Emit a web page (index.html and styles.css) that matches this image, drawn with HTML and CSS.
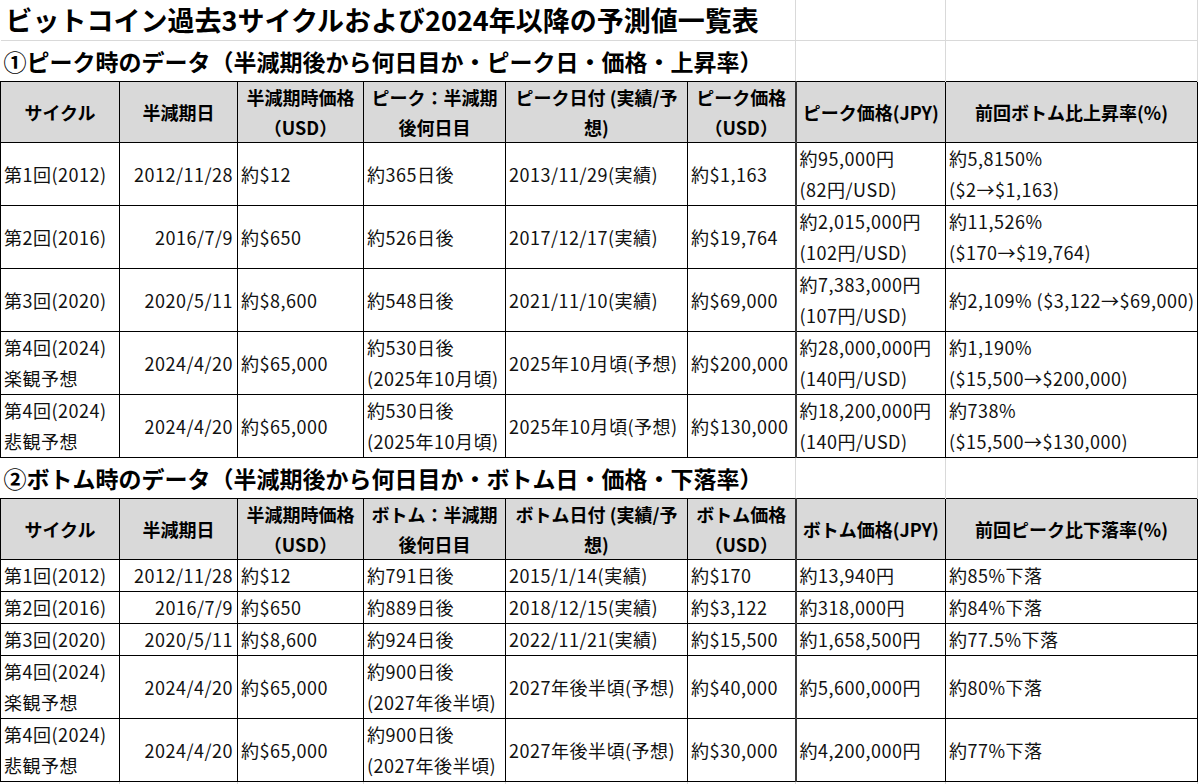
FILE: index.html
```html
<!DOCTYPE html>
<html lang="ja">
<head>
<meta charset="utf-8">
<title>ビットコイン過去3サイクルおよび2024年以降の予測値一覧表</title>
<link rel="stylesheet" href="styles.css">
</head>
<body>
<table class="sheet">
  <colgroup>
    <col class="c-a"><col class="c-b"><col class="c-c"><col class="c-d"><col class="c-e"><col class="c-f"><col class="c-g"><col class="c-h">
  </colgroup>
  <tbody>
    <tr class="r-title">
      <td colspan="6" class="title g gb">ビットコイン過去3サイクルおよび2024年以降の予測値一覧表</td>
      <td class="g gb"></td>
      <td class="g gb"></td>
    </tr>
    <tr class="r-head">
      <td colspan="6" class="heading g">①ピーク時のデータ（半減期後から何日目か・ピーク日・価格・上昇率）</td>
      <td class="g"></td>
      <td class="g"></td>
    </tr>
    <tr class="t hdr r-hdr1">
      <td>サイクル</td>
      <td>半減期日</td>
      <td>半減期時価格<br>（USD）</td>
      <td>ピーク：半減期<br>後何日目</td>
      <td>ピーク日付 (実績/予<br>想)</td>
      <td>ピーク価格<br>（USD）</td>
      <td class="gl">ピーク価格(JPY)</td>
      <td>前回ボトム比上昇率(%)</td>
    </tr>
    <tr class="t r63">
      <td>第1回(2012)</td>
      <td class="num">2012/11/28</td>
      <td>約$12</td>
      <td>約365日後</td>
      <td>2013/11/29(実績)</td>
      <td>約$1,163</td>
      <td class="gl">約95,000円<br>(82円/USD)</td>
      <td>約5,8150%<br>($2→$1,163)</td>
    </tr>
    <tr class="t r63">
      <td>第2回(2016)</td>
      <td class="num">2016/7/9</td>
      <td>約$650</td>
      <td>約526日後</td>
      <td>2017/12/17(実績)</td>
      <td>約$19,764</td>
      <td class="gl">約2,015,000円<br>(102円/USD)</td>
      <td>約11,526%<br>($170→$19,764)</td>
    </tr>
    <tr class="t r63">
      <td>第3回(2020)</td>
      <td class="num">2020/5/11</td>
      <td>約$8,600</td>
      <td>約548日後</td>
      <td>2021/11/10(実績)</td>
      <td>約$69,000</td>
      <td class="gl">約7,383,000円<br>(107円/USD)</td>
      <td>約2,109% ($3,122→$69,000)</td>
    </tr>
    <tr class="t r63">
      <td>第4回(2024)<br>楽観予想</td>
      <td class="num">2024/4/20</td>
      <td>約$65,000</td>
      <td>約530日後<br>(2025年10月頃)</td>
      <td>2025年10月頃(予想)</td>
      <td>約$200,000</td>
      <td class="gl">約28,000,000円<br>(140円/USD)</td>
      <td>約1,190%<br>($15,500→$200,000)</td>
    </tr>
    <tr class="t r63">
      <td>第4回(2024)<br>悲観予想</td>
      <td class="num">2024/4/20</td>
      <td>約$65,000</td>
      <td>約530日後<br>(2025年10月頃)</td>
      <td>2025年10月頃(予想)</td>
      <td>約$130,000</td>
      <td class="gl">約18,200,000円<br>(140円/USD)</td>
      <td>約738%<br>($15,500→$130,000)</td>
    </tr>
    <tr class="r-head2">
      <td colspan="6" class="heading g">②ボトム時のデータ（半減期後から何日目か・ボトム日・価格・下落率）</td>
      <td class="g"></td>
      <td class="g"></td>
    </tr>
    <tr class="t hdr r-hdr2">
      <td>サイクル</td>
      <td>半減期日</td>
      <td>半減期時価格<br>（USD）</td>
      <td>ボトム：半減期<br>後何日目</td>
      <td>ボトム日付 (実績/予<br>想)</td>
      <td>ボトム価格<br>（USD）</td>
      <td class="gl">ボトム価格(JPY)</td>
      <td>前回ピーク比下落率(%)</td>
    </tr>
    <tr class="t r32">
      <td>第1回(2012)</td>
      <td class="num">2012/11/28</td>
      <td>約$12</td>
      <td>約791日後</td>
      <td>2015/1/14(実績)</td>
      <td>約$170</td>
      <td class="gl">約13,940円</td>
      <td>約85%下落</td>
    </tr>
    <tr class="t r32">
      <td>第2回(2016)</td>
      <td class="num">2016/7/9</td>
      <td>約$650</td>
      <td>約889日後</td>
      <td>2018/12/15(実績)</td>
      <td>約$3,122</td>
      <td class="gl">約318,000円</td>
      <td>約84%下落</td>
    </tr>
    <tr class="t r32">
      <td>第3回(2020)</td>
      <td class="num">2020/5/11</td>
      <td>約$8,600</td>
      <td>約924日後</td>
      <td>2022/11/21(実績)</td>
      <td>約$15,500</td>
      <td class="gl">約1,658,500円</td>
      <td>約77.5%下落</td>
    </tr>
    <tr class="t r63">
      <td>第4回(2024)<br>楽観予想</td>
      <td class="num">2024/4/20</td>
      <td>約$65,000</td>
      <td>約900日後<br>(2027年後半頃)</td>
      <td>2027年後半頃(予想)</td>
      <td>約$40,000</td>
      <td class="gl">約5,600,000円</td>
      <td>約80%下落</td>
    </tr>
    <tr class="t r63">
      <td>第4回(2024)<br>悲観予想</td>
      <td class="num">2024/4/20</td>
      <td>約$65,000</td>
      <td>約900日後<br>(2027年後半頃)</td>
      <td>2027年後半頃(予想)</td>
      <td>約$30,000</td>
      <td class="gl">約4,200,000円</td>
      <td>約77%下落</td>
    </tr>
    <tr class="r-tail">
      <td class="g"></td><td class="g"></td><td class="g"></td><td class="g"></td><td class="g"></td><td class="g"></td><td class="g"></td><td class="g"></td>
    </tr>
  </tbody>
</table>
</body>
</html>
```

FILE: styles.css
```css
html, body {
  margin: 0;
  padding: 0;
  background: #ffffff;
}

body {
  font-family: "Noto Sans CJK JP", "Noto Sans", sans-serif;
  color: #000000;
}

.sheet {
  border-collapse: collapse;
  table-layout: fixed;
  width: 1197px;
}

.c-a { width: 119px; }
.c-b { width: 118px; }
.c-c { width: 126px; }
.c-d { width: 142px; }
.c-e { width: 182px; }
.c-f { width: 108px; }
.c-g { width: 150px; }
.c-h { width: 252px; }

.sheet td {
  padding: 0 3px;
  white-space: nowrap;
  overflow: visible;
  font-size: 18px;
  line-height: 31px;
  letter-spacing: 0.5px;
  vertical-align: middle;
  text-align: left;
  color: #111111;
}

/* light spreadsheet gridlines */
.sheet td.g {
  border-right: 1px solid #d9d9d9;
}

.sheet td.gb {
  border-bottom: 1px solid #d9d9d9;
}

.r-title { height: 40px; }
.r-head { height: 41px; }
.r-head2 { height: 39px; }
.r-tail { height: 4px; }

.sheet td.title {
  font-size: 27px;
  font-weight: 700;
  line-height: 40px;
  letter-spacing: 0;
  padding-left: 5px;
  color: #000000;
}

.sheet td.heading {
  font-size: 23px;
  font-weight: 700;
  line-height: 40px;
  letter-spacing: 0;
  padding-left: 3px;
  color: #000000;
}

/* bordered table rows */
.t td {
  border: 1px solid #000000;
}

.t td.gl {
  border-left: 2px solid #3a3a3a;
}

.hdr td {
  background: #d9d9d9;
  font-weight: 700;
  text-align: center;
  line-height: 30px;
  letter-spacing: 0;
  color: #000000;
}

.r-hdr1 { height: 60px; }
.r-hdr2 { height: 61px; }
.r63 { height: 63px; }
.r32 { height: 32px; }

.sheet td.num {
  text-align: right;
  padding-right: 4px;
}
```
